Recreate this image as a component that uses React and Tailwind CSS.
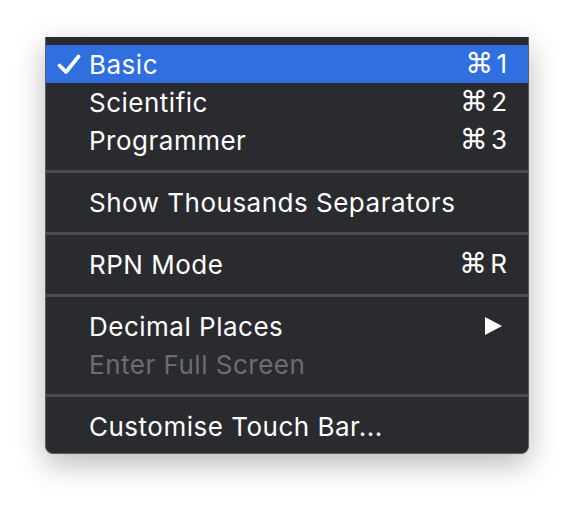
import React from 'react';

const Row = ({ label, shortcut, checked, active, disabled, submenu }) => (
  <div
    className={`flex items-center h-[38px] pl-[43px] pr-[21px] ${active ? 'bg-[#2f6fe0]' : ''} ${disabled ? 'text-[#6c6d71]' : 'text-white'}`}
  >
    <span className="w-[46px] flex items-center">
      {checked && (
        <svg width="24" height="21" viewBox="0 0 24 21" className="ml-[-32px]">
          <path d="M2.5 11.5 L9 18 L21.5 2.5" fill="none" stroke="white" strokeWidth="3.8" strokeLinecap="round" strokeLinejoin="round" />
        </svg>
      )}
    </span>
    <span className="flex-1 ml-[-46px] tracking-[0.5px]">{label}</span>
    {shortcut && (
      <span className="flex items-baseline">
        <span className="text-[28px] mr-[3px]" style={{ fontFamily: '"DejaVu Sans ExtraLight", "DejaVu Sans", sans-serif' }}>⌘</span>
        <span>{shortcut}</span>
      </span>
    )}
    {submenu && (
      <svg width="17" height="18" viewBox="0 0 17 18" className="mr-[5px]">
        <path d="M0 0 L17 9 L0 18 Z" fill="white" />
      </svg>
    )}
  </div>
);

const Sep = () => (
  <div className="pt-[11px] pb-[10px]">
    <div className="h-[3px] bg-[#4b4c50]" />
  </div>
);

export default function App() {
  return (
    <div className="w-[574px] h-[508px] bg-white pl-[45px] pt-[37px]" style={{ fontFamily: 'Inter, "DejaVu Sans", sans-serif' }}>
      <div className="w-[484px] bg-[#2a2b2f] border-x-[1.5px] border-b-[1.5px] border-[#5c5d61] rounded-b-[8px] pt-[8px] pb-[8px] text-[26px] shadow-[0_10px_30px_rgba(0,0,0,0.28)]">
        <Row label="Basic" shortcut="1" checked active />
        <Row label="Scientific" shortcut="2" />
        <Row label="Programmer" shortcut="3" />
        <Sep />
        <Row label="Show Thousands Separators" />
        <Sep />
        <Row label="RPN Mode" shortcut="R" />
        <Sep />
        <Row label="Decimal Places" submenu />
        <Row label="Enter Full Screen" disabled />
        <Sep />
        <Row label="Customise Touch Bar..." />
      </div>
    </div>
  );
}
